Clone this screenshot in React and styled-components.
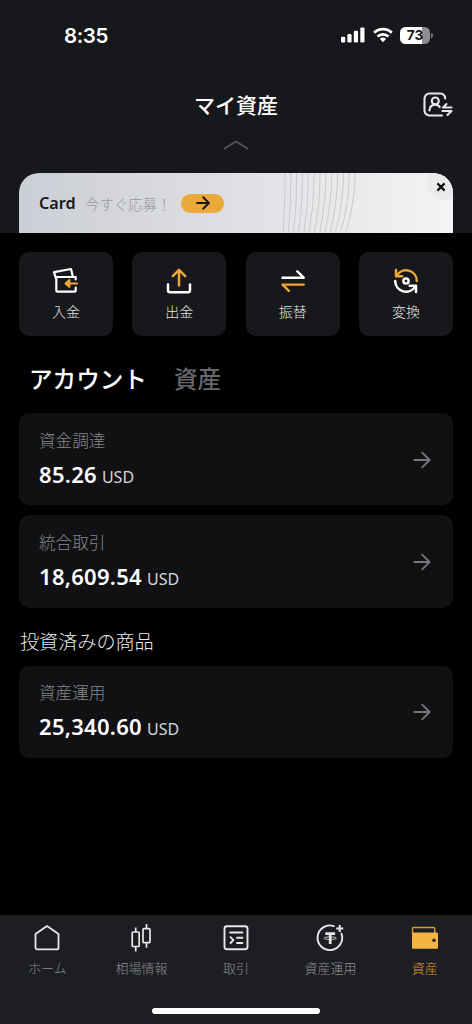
import React from "react";
import styled, { createGlobalStyle } from "styled-components";

const actions = [
  { label: "入金", icon: <DepositIcon /> },
  { label: "出金", icon: <WithdrawIcon /> },
  { label: "振替", icon: <TransferIcon /> },
  { label: "変換", icon: <ConvertIcon /> },
];

const accounts = [
  { name: "資金調達", amount: "85.26" },
  { name: "統合取引", amount: "18,609.54" },
];

const invested = [{ name: "資産運用", amount: "25,340.60" }];

const tabs = [
  { label: "ホーム", icon: <HomeIcon /> },
  { label: "相場情報", icon: <MarketIcon /> },
  { label: "取引", icon: <TradeIcon /> },
  { label: "資産運用", icon: <EarnIcon /> },
  { label: "資産", icon: <WalletIcon />, active: true },
];

function App() {
  return (
    <Screen>
      <GlobalStyle />
      <Top>
        <StatusBar>
          <Time>8:35</Time>
          <StatusIcons>
            <SignalIcon />
            <WifiIcon />
            <Battery>
              <Level>73</Level>
              <Tip />
            </Battery>
          </StatusIcons>
        </StatusBar>
        <Header>
          <span />
          <Title>マイ資産</Title>
          <AccountIcon />
        </Header>
        <Collapse>
          <svg width="28" height="12" viewBox="0 0 28 12" fill="none">
            <path
              d="M2.5 9.5 14 2.5 25.5 9.5"
              stroke="#55565a"
              strokeWidth="1.8"
              strokeLinecap="round"
            />
          </svg>
        </Collapse>
        <Banner>
          <BannerLines />
          <BannerTitle>Card</BannerTitle>
          <BannerText>今すぐ応募！</BannerText>
          <BannerButton>
            <Arrow size={14} color="#17181b" weight={1.8} />
          </BannerButton>
          <BannerClose>
            <svg width="10" height="10" viewBox="0 0 10 10">
              <path
                d="M1.4 1.4 8.6 8.6M8.6 1.4 1.4 8.6"
                stroke="#111"
                strokeWidth="2.2"
              />
            </svg>
          </BannerClose>
        </Banner>
      </Top>

      <Content>
        <Actions>
          {actions.map((a) => (
            <Action key={a.label}>
              {a.icon}
              <span>{a.label}</span>
            </Action>
          ))}
        </Actions>
        <Switcher>
          <SwitchItem $on>アカウント</SwitchItem>
          <SwitchItem>資産</SwitchItem>
        </Switcher>
        <List>
          {accounts.map((a) => (
            <Account key={a.name} {...a} />
          ))}
        </List>
        <SectionTitle>投資済みの商品</SectionTitle>
        <List>
          {invested.map((a) => (
            <Account key={a.name} {...a} />
          ))}
        </List>
      </Content>

      <Bottom>
        <TabBar>
          {tabs.map((t) => (
            <Tab key={t.label} $active={t.active}>
              {t.icon}
              <span>{t.label}</span>
            </Tab>
          ))}
        </TabBar>
        <HomeIndicator />
      </Bottom>
    </Screen>
  );
}

function Account({ name, amount }) {
  return (
    <Card>
      <div>
        <CardName>{name}</CardName>
        <Amount>
          {amount}
          <Unit>USD</Unit>
        </Amount>
      </div>
      <Arrow size={18} color="#77787b" weight={1.8} />
    </Card>
  );
}

function Arrow({ size, color, weight }) {
  return (
    <svg width={size} height={size} viewBox="0 0 18 18" fill="none">
      <path
        d="M1.3 9H16.4M9.2 1.6 16.6 9 9.2 16.4"
        stroke={color}
        strokeWidth={(weight * 18) / size}
        strokeLinecap="round"
        strokeLinejoin="round"
      />
    </svg>
  );
}

function SignalIcon() {
  return (
    <svg width="25" height="16" viewBox="0 0 25 16" fill="#fff">
      <rect x="0" y="9.7" width="4.2" height="5.8" rx="1.2" />
      <rect x="6.4" y="7" width="4.2" height="8.5" rx="1.2" />
      <rect x="12.8" y="3.8" width="4.2" height="11.7" rx="1.2" />
      <rect x="19.3" y="0.4" width="4.2" height="15.1" rx="1.2" />
    </svg>
  );
}

function WifiIcon() {
  return (
    <svg width="20" height="16" viewBox="0 0 20 16" fill="none">
      <path d="M1.2 5.7a12.6 12.6 0 0 1 17.6 0" stroke="#fff" strokeWidth="2.9" />
      <path d="M4.5 9.5a8 8 0 0 1 11 0" stroke="#fff" strokeWidth="2.7" />
      <path d="M10 15.3 6.9 12a4.5 4.5 0 0 1 6.2 0Z" fill="#fff" />
    </svg>
  );
}

function AccountIcon() {
  return (
    <svg width="30" height="26" viewBox="0 0 30 26" fill="none">
      <g
        stroke="#e6e7e8"
        strokeWidth="2.1"
        strokeLinecap="round"
        strokeLinejoin="round"
      >
        <path d="M22.2 6.5A4.8 4.8 0 0 0 17.500 1.5h-11A5 5 0 0 0 1.5 6.500v12a5 5 0 0 0 5 5H19" />
        <circle cx="12.3" cy="9" r="3.5" />
        <path d="M6.4 18.5c.3-3.8 2.5-5.9 5.9-5.9 2 0 3.5.9 4.4 2.5" />
        <path d="M28.5 15.5H20l3.5-3.4M19.5 19H28.5l-4 4" />
      </g>
    </svg>
  );
}

function BannerLines() {
  // fan of thin arcs running from the top edge to the bottom edge
  const lines = Array.from({ length: 13 }, (_, i) => {
    const x = 3 + i * 5.85;
    const drop = 2 + i * 0.65;
    return `M${x} 0Q${x + 0.4 - i * 0.05} 30 ${x - drop} 61`;
  });
  return (
    <Fan width="80" height="61" viewBox="0 0 80 61" fill="none">
      <path d={lines.join("")} stroke="#c9cacc" strokeWidth="1" />
    </Fan>
  );
}

function DepositIcon() {
  return (
    <svg width="28" height="28" viewBox="0 0 28 28" fill="none">
      <g strokeWidth="2.2" strokeLinejoin="round" strokeLinecap="round">
        <path
          d="M23.7 12.5V10H4.3v13.5a1.2 1.2 0 0 0 1.2 1.2h17a1.2 1.2 0 0 0 1.2-1.2v-3"
          stroke="#fff"
        />
        <path d="M3.8 11 2 5.2 19 2l1.8 7.5" stroke="#fff" />
        <path
          d="M25 16.5H14M17.3 13.2 13.6 16.5 17.3 19.8Z"
          stroke="#eda634"
          fill="#eda634"
        />
      </g>
    </svg>
  );
}

function WithdrawIcon() {
  return (
    <svg width="28" height="28" viewBox="0 0 28 28" fill="none">
      <g strokeWidth="2.5" strokeLinejoin="round" strokeLinecap="round">
        <path d="M3 17.5v5.7a2 2 0 0 0 2 2h18a2 2 0 0 0 2-2v-5.7" stroke="#fff" />
        <path d="M14 18.5V3M7.8 9.1 14 2.9l6.2 6.2" stroke="#eda634" />
      </g>
    </svg>
  );
}

function TransferIcon() {
  return (
    <svg width="28" height="28" viewBox="0 0 28 28" fill="none">
      <g strokeWidth="2.4" strokeLinejoin="round" strokeLinecap="round">
        <path d="M3.5 10.7H24.7L18.3 4.4" stroke="#fff" />
        <path d="M24.7 17.6H3.5L9.9 23.9" stroke="#eda634" />
      </g>
    </svg>
  );
}

function ConvertIcon() {
  return (
    <svg width="28" height="28" viewBox="0 0 28 28" fill="none">
      <g strokeWidth="2.5" strokeLinejoin="round" strokeLinecap="round">
        <path
          d="M24.8 14A10.8 10.8 0 0 0 4.7 8.6M4 3v6.3h6.3"
          stroke="#eda634"
        />
        <path
          d="M3.2 14a10.8 10.8 0 0 0 20.1 5.4M17.7 18.7H24V25"
          stroke="#fff"
        />
        <circle cx="14" cy="14" r="2.6" stroke="#fff" />
      </g>
    </svg>
  );
}

function HomeIcon() {
  return (
    <svg width="28" height="28" viewBox="0 0 28 28" fill="none">
      <path
        d="M2.5 9.9 14 2.1l11.5 7.8v13.5a2 2 0 0 1-2 2h-19a2 2 0 0 1-2-2Z"
        stroke="#e8e8e9"
        strokeWidth="1.8"
        strokeLinejoin="round"
      />
    </svg>
  );
}

function MarketIcon() {
  return (
    <svg width="28" height="28" viewBox="0 0 28 28" fill="none">
      <g stroke="#e8e8e9" strokeWidth="1.7">
        <rect x="4.2" y="8" width="7" height="14.5" rx="1" />
        <rect x="15" y="4.7" width="7" height="14" rx="1" />
        <path d="M7.7 3.5v4.5M7.7 22.5v5M18.5 0v4.7M18.5 18.7v5" />
      </g>
    </svg>
  );
}

function TradeIcon() {
  return (
    <svg width="28" height="28" viewBox="0 0 28 28" fill="none">
      <g stroke="#e8e8e9" strokeWidth="1.9" strokeLinecap="round">
        <rect x="2.5" y="2.2" width="23" height="23" rx="2.5" />
        <path d="M8 8.5H20.5M15 13.7h5.5M15 19h5.5" />
        <path d="M8.5 13.2 11.4 16.1 8.5 19" strokeLinejoin="round" />
      </g>
    </svg>
  );
}

function EarnIcon() {
  return (
    <svg width="28" height="28" viewBox="0 0 28 28" fill="none">
      <g stroke="#e8e8e9">
        <path
          d="M17.8 2.1A12.3 12.3 0 1 0 25.5 9.7"
          strokeWidth="1.9"
          strokeLinecap="round"
        />
        <path d="M23.7 1v7M20.2 4.5h7" strokeWidth="2" />
        <path d="M9.3 9.7h9.8M14.2 9.5v10.5" strokeWidth="2.7" />
        <ellipse cx="14.2" cy="14.2" rx="6.2" ry="1.3" strokeWidth="0.8" />
      </g>
    </svg>
  );
}

function WalletIcon() {
  return (
    <svg width="28" height="28" viewBox="0 0 28 28" fill="none">
      <path
        d="M23.7 9V4.5a1 1 0 0 0-1-1H2.5a1 1 0 0 0-1 1V9"
        stroke="#d79a38"
        strokeWidth="1.4"
      />
      <path
        d="M1 8.5h25a1 1 0 0 1 1 1V23.7a1 1 0 0 1-1 1H2a1 1 0 0 1-1-1Z"
        fill="#f5b344"
      />
      <circle cx="23" cy="16.2" r="1.7" fill="#1d1e22" />
    </svg>
  );
}

const GlobalStyle = createGlobalStyle`
  * {
    box-sizing: border-box;
  }
  body {
    margin: 0;
    background: #000;
    font-family: "Noto Sans", "Noto Sans CJK JP", sans-serif;
    color: #fff;
  }
  svg {
    display: block;
    flex-shrink: 0;
  }
`;
const Screen = styled.div`
  display: flex;
  flex-direction: column;
  width: 472px;
  height: 1024px;
  overflow: hidden;
  background: #000;
`;
const Top = styled.div`
  height: 233px;
  padding: 0 19px;
  background: #17181b;
`;
const StatusBar = styled.div`
  display: flex;
  align-items: center;
  justify-content: space-between;
  height: 70px;
  padding: 0 20px 0 45px;
`;
const Time = styled.div`
  font-family: Inter, sans-serif;
  font-size: 20.5px;
  font-weight: 600;
  letter-spacing: -0.4px;
`;
const StatusIcons = styled.div`
  display: flex;
  align-items: center;
  gap: 7px;
`;
const Battery = styled.div`
  display: flex;
  align-items: center;
  gap: 1px;
`;
const Level = styled.div`
  width: 30px;
  height: 17px;
  border-radius: 5.5px;
  background: linear-gradient(90deg, #fff 73%, #8c8c8f 73%);
  font-family: Inter, sans-serif;
  font-size: 13.6px;
  font-weight: 700;
  line-height: 17px;
  text-align: center;
  color: #17181b;
`;
const Tip = styled.div`
  width: 2px;
  height: 5px;
  border-radius: 0 2px 2px 0;
  background: #77787b;
`;
const Header = styled.div`
  display: grid;
  grid-template-columns: 30px 1fr 30px;
  align-items: center;
  height: 69px;
`;
const Title = styled.div`
  font-size: 21px;
  font-weight: 500;
  line-height: 30px;
  text-align: center;
`;
const Collapse = styled.div`
  display: flex;
  justify-content: center;
  height: 34px;
`;
const Banner = styled.div`
  position: relative;
  display: flex;
  align-items: center;
  height: 60px;
  padding-left: 20px;
  border-radius: 20px 20px 0 0;
  overflow: hidden;
  background: linear-gradient(90deg, #cbced5, #dfe0e3 50%, #f4f4f6);
`;
const Fan = styled.svg`
  position: absolute;
  top: 0;
  left: 263px;
`;
const BannerTitle = styled.div`
  width: 46px;
  font-size: 16.2px;
  font-weight: 600;
  color: #17181b;
`;
const BannerText = styled.div`
  width: 96px;
  font-size: 14.4px;
  font-weight: 300;
  white-space: nowrap;
  color: #96989c;
`;
const BannerButton = styled.div`
  display: flex;
  align-items: center;
  justify-content: center;
  width: 43px;
  height: 19px;
  border-radius: 10px;
  background: #eba93b;
`;
const BannerClose = styled.div`
  position: absolute;
  top: -8px;
  right: -9px;
  display: flex;
  align-items: center;
  padding: 8px 0 0 9px;
  width: 35px;
  height: 35px;
  border-radius: 50%;
  background: #e9eaec;
`;
const Content = styled.div`
  flex: 1;
  padding: 19px 19px 0;
`;
const Actions = styled.div`
  display: grid;
  grid-template-columns: repeat(4, 94px);
  justify-content: space-between;
`;
const Action = styled.div`
  display: flex;
  flex-direction: column;
  align-items: center;
  height: 84px;
  padding-top: 15px;
  border-radius: 10px;
  background: #17181b;
  span {
    margin-top: 7px;
    font-size: 14px;
    font-weight: 300;
    line-height: 20px;
    color: #e3e4e5;
  }
`;
const Switcher = styled.div`
  display: flex;
  gap: 27px;
  height: 77px;
  padding: 25px 0 0 10px;
`;
const SwitchItem = styled.div`
  font-size: 23.6px;
  font-weight: 500;
  line-height: 36px;
  color: ${(p) => (p.$on ? "#fff" : "#66686c")};
`;
const List = styled.div`
  display: flex;
  flex-direction: column;
  gap: 10px;
`;
const Card = styled.div`
  display: flex;
  align-items: center;
  justify-content: space-between;
  height: 92.4px;
  padding: 1px 22px 0 20px;
  border-radius: 10px;
  background: #111114;
`;
const CardName = styled.div`
  margin-top: 2px;
  font-size: 16.6px;
  font-weight: 300;
  line-height: 24px;
  color: #85878b;
`;
const Amount = styled.div`
  display: flex;
  align-items: baseline;
  margin-top: 5px;
  font-size: 22px;
  font-weight: 600;
  line-height: 32px;
  letter-spacing: 0.3px;
`;
const Unit = styled.span`
  margin-left: 5px;
  font-size: 16px;
  font-weight: 400;
  letter-spacing: 0;
  color: #d6d7d8;
`;
const SectionTitle = styled.div`
  padding: 17px 0 0 1px;
  height: 58px;
  font-size: 19.1px;
  font-weight: 300;
  line-height: 34px;
  color: #e6e7e8;
`;
const Bottom = styled.div`
  height: 109px;
  background: #1d1e22;
`;
const TabBar = styled.div`
  display: grid;
  grid-template-columns: repeat(5, 1fr);
  height: 93px;
`;
const Tab = styled.div`
  display: flex;
  flex-direction: column;
  align-items: center;
  padding-top: 9px;
  span {
    margin-top: 6px;
    font-size: 13px;
    font-weight: 300;
    line-height: 20px;
    color: ${(p) => (p.$active ? "#d9962e" : "#8b8d91")};
  }
`;
const HomeIndicator = styled.div`
  width: 168px;
  height: 6px;
  margin: 0 auto;
  border-radius: 3px;
  background: #fff;
`;

export default App;
